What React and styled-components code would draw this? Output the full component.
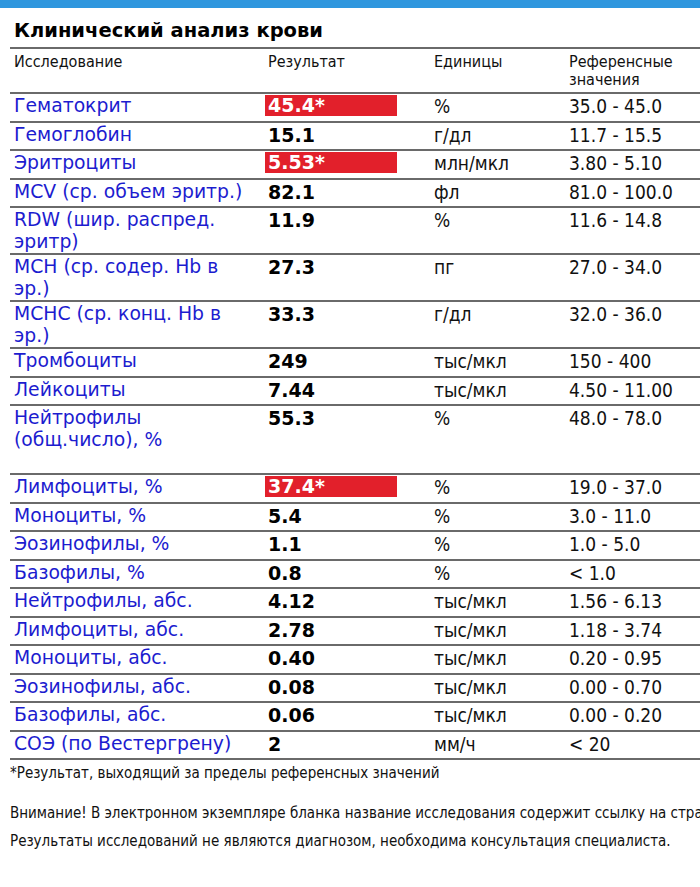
import React from 'react';
import styled, { createGlobalStyle } from 'styled-components';

const GlobalStyle = createGlobalStyle`
  body {
    margin: 0;
    background: #fff;
    overflow: hidden;
  }
`;

const rows = [
  { name: 'Гематокрит', value: '45.4*', unit: '%', ref: '35.0 - 45.0', high: true },
  { name: 'Гемоглобин', value: '15.1', unit: 'г/дл', ref: '11.7 - 15.5' },
  { name: 'Эритроциты', value: '5.53*', unit: 'млн/мкл', ref: '3.80 - 5.10', high: true },
  { name: 'MCV (ср. объем эритр.)', value: '82.1', unit: 'фл', ref: '81.0 - 100.0' },
  { name: 'RDW (шир. распред. эритр)', value: '11.9', unit: '%', ref: '11.6 - 14.8' },
  { name: 'MCH (ср. содер. Hb в эр.)', value: '27.3', unit: 'пг', ref: '27.0 - 34.0' },
  { name: 'MCHC (ср. конц. Hb в эр.)', value: '33.3', unit: 'г/дл', ref: '32.0 - 36.0' },
  { name: 'Тромбоциты', value: '249', unit: 'тыс/мкл', ref: '150 - 400' },
  { name: 'Лейкоциты', value: '7.44', unit: 'тыс/мкл', ref: '4.50 - 11.00' },
  { name: 'Нейтрофилы (общ.число), %', value: '55.3', unit: '%', ref: '48.0 - 78.0', tall: true },
  { name: 'Лимфоциты, %', value: '37.4*', unit: '%', ref: '19.0 - 37.0', high: true },
  { name: 'Моноциты, %', value: '5.4', unit: '%', ref: '3.0 - 11.0' },
  { name: 'Эозинофилы, %', value: '1.1', unit: '%', ref: '1.0 - 5.0' },
  { name: 'Базофилы, %', value: '0.8', unit: '%', ref: '< 1.0' },
  { name: 'Нейтрофилы, абс.', value: '4.12', unit: 'тыс/мкл', ref: '1.56 - 6.13' },
  { name: 'Лимфоциты, абс.', value: '2.78', unit: 'тыс/мкл', ref: '1.18 - 3.74' },
  { name: 'Моноциты, абс.', value: '0.40', unit: 'тыс/мкл', ref: '0.20 - 0.95' },
  { name: 'Эозинофилы, абс.', value: '0.08', unit: 'тыс/мкл', ref: '0.00 - 0.70' },
  { name: 'Базофилы, абс.', value: '0.06', unit: 'тыс/мкл', ref: '0.00 - 0.20' },
  { name: 'СОЭ (по Вестергрену)', value: '2', unit: 'мм/ч', ref: '< 20' },
];

const TopBar = styled.div`
  height: 8px;
  background: #2f97de;
`;

const Sheet = styled.div`
  padding-left: 10px;
  width: 690px;
  overflow: hidden;
`;

const Title = styled.h1`
  margin: 0;
  padding: 12px 0 5px 4px;
  font: bold 19.5px/22px "DejaVu Sans", Verdana, sans-serif;
  color: #000;
  border-bottom: 2px solid #6a6a6a;
`;

const Row = styled.div`
  display: grid;
  grid-template-columns: 254px 166px 135px 1fr;
  padding: 1px 0 0 4px;
  min-height: ${(p) => (p.$tall ? '66px' : '25.5px')};
  border-bottom: 2px solid #6a6a6a;
  line-height: 22px;
`;

const HeadRow = styled(Row)`
  padding: 4px 0 3px 4px;
  line-height: 18px;
  min-height: 36px;
`;

const HeadCell = styled.div`
  font: 16px/18px "DejaVu Sans Condensed", Tahoma, sans-serif;
  color: #111;
`;

const Name = styled.div`
  font: 18.8px/22px "DejaVu Sans", Verdana, sans-serif;
  color: #1c1ccf;
  padding-right: 14px;
`;

const Value = styled.div`
  font: bold 19px/22px "DejaVu Sans", Verdana, sans-serif;
  color: #000;
`;

const Flag = styled.span`
  display: block;
  width: 129px;
  margin: 0 0 0 -3px;
  padding-left: 3px;
  line-height: 21px;
  background: #e2202b;
  color: #fff;
`;

const Plain = styled.div`
  font: 19px/22px "DejaVu Sans Condensed", Tahoma, sans-serif;
  color: #111;
`;

const Note = styled.p`
  margin: 0;
  padding: ${(p) => p.$pad || '0'};
  font: 15px/20px "DejaVu Sans Condensed", Tahoma, sans-serif;
  color: #111;
  white-space: nowrap;
`;

export default function App() {
  return (
    <>
      <GlobalStyle />
      <TopBar />
      <Sheet>
        <Title>Клинический анализ крови</Title>
        <HeadRow>
          <HeadCell>Исследование</HeadCell>
          <HeadCell>Результат</HeadCell>
          <HeadCell>Единицы</HeadCell>
          <HeadCell>Референсные<br />значения</HeadCell>
        </HeadRow>
        {rows.map((r) => (
          <Row key={r.name} $tall={r.tall}>
            <Name>{r.name}</Name>
            <Value>{r.high ? <Flag>{r.value}</Flag> : r.value}</Value>
            <Plain>{r.unit}</Plain>
            <Plain>{r.ref}</Plain>
          </Row>
        ))}
        <Note $pad="3px 0 0 0">*Результат, выходящий за пределы референсных значений</Note>
        <Note $pad="20px 0 0 0">Внимание! В электронном экземпляре бланка название исследования содержит ссылку на страницу с подробным описанием.</Note>
        <Note $pad="8px 0 0 0">Результаты исследований не являются диагнозом, необходима консультация специалиста.</Note>
      </Sheet>
    </>
  );
}
